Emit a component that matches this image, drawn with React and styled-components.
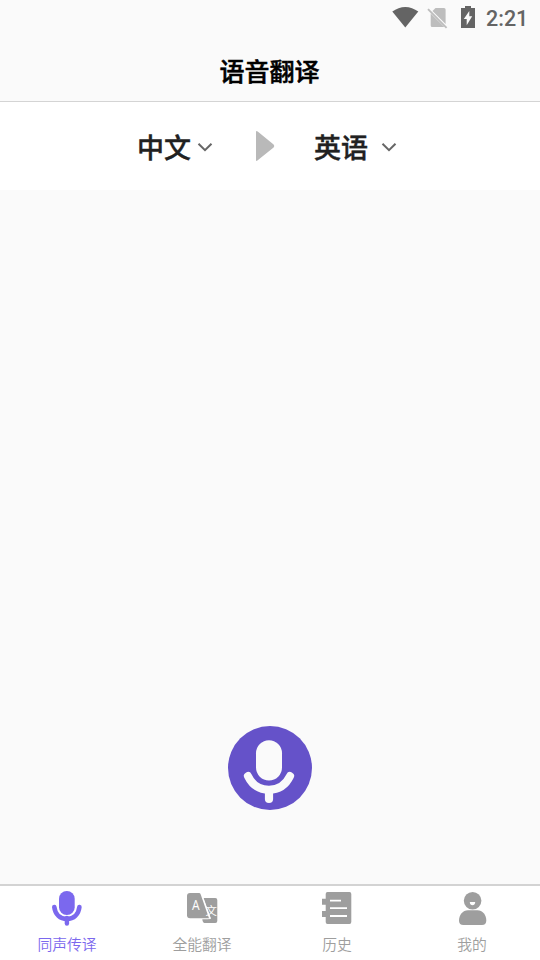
import React, { Component } from 'react';
import styled, { createGlobalStyle } from 'styled-components';

const GlobalStyle = createGlobalStyle`
  body {
    margin: 0;
    font-family: Roboto, "Noto Sans CJK SC", sans-serif;
  }
`;
const Screen = styled.div`
  display: flex;
  flex-direction: column;
  height: 100vh;
  background-color: #fafafa;
`;
const StatusBar = styled.div`
  display: flex;
  justify-content: flex-end;
  align-items: center;
  height: 36px;
  padding-right: 13px;
  color: #646464;
`;
const StatusIcons = styled.svg`
  display: block;
  width: 90px;
  height: 36px;
`;
const Clock = styled.span`
  width: 41px;
  margin-left: 5px;
  font-size: 21.5px;
  font-weight: 500;
  line-height: 36px;
  padding-top: 2px;
  white-space: nowrap;
`;
const Title = styled.h1`
  height: 65px;
  margin: 0;
  padding-right: 1px;
  border-bottom: 1px solid #d4d4d4;
  font-size: 25px;
  font-weight: 500;
  line-height: 73px;
  text-align: center;
  color: #000;
  -webkit-text-stroke: 0.5px #000;
`;
const LanguageBar = styled.div`
  display: flex;
  align-items: center;
  height: 88px;
  padding-left: 137px;
  background-color: white;
`;
const Language = styled.button`
  display: flex;
  align-items: center;
  gap: ${props => props.$gap}px;
  padding: 0;
  border: 0;
  background: none;
  font-family: inherit;
  font-size: 27px;
  font-weight: 500;
  color: #212121;
`;
const LanguageName = styled.span`
  padding-top: 6px;
  line-height: 40px;
  -webkit-text-stroke: 0.4px #212121;
`;
const Chevron = styled.svg`
  display: block;
  width: 16px;
  height: 10px;
  margin-top: 2px;
`;
const Arrow = styled.svg`
  display: block;
  width: 20px;
  height: 32px;
  margin: 0 39px 0 42px;
`;
const Content = styled.main`
  flex: 1;
  display: flex;
  justify-content: center;
  align-items: flex-end;
  padding-bottom: 74px;
`;
const RecordButton = styled.button`
  width: 84px;
  height: 84px;
  padding: 0;
  border: 0;
  border-radius: 50%;
  background-color: #6552c9;
`;
const RecordIcon = styled.svg`
  display: block;
  width: 84px;
  height: 84px;
`;
const TabBar = styled.nav`
  display: flex;
  height: 74px;
  border-top: 2px solid #d3d3d3;
  background-color: white;
`;
const Tab = styled.div`
  flex: 1;
  display: flex;
  flex-direction: column;
  align-items: center;
  padding-top: 4px;
  color: ${props => (props.$active ? '#7b68ee' : '#9e9e9e')};
`;
const TabIcon = styled.svg`
  display: block;
  width: 33px;
  height: 37px;
`;
const TabLabel = styled.span`
  margin-top: 7px;
  margin-right: 1px;
  font-size: 14.8px;
  font-weight: 350;
  line-height: 22px;
`;

const Down = () => (
  <Chevron viewBox="0 0 16 10" fill="none" stroke="#666" strokeWidth="2">
    <path d="M1.5 1.7L8 8.2L14.5 1.7" />
  </Chevron>
);

const icons = {
  mic: (
    <g>
      <rect x="8" y="1" width="15.7" height="24" rx="7.8" fill="currentColor" />
      <path
        d="M3.3 17C4.2 24.7 9.2 29 15.9 29S27.5 24.7 28.4 17"
        fill="none" stroke="currentColor" strokeWidth="4.6" strokeLinecap="round" />
      <path d="M15.9 28V33.6" stroke="currentColor" strokeWidth="4.4" strokeLinecap="round" />
    </g>
  ),
  translate: (
    <g>
      <path
        d="M17.2 8H29.3Q31.3 8 31.3 10V31Q31.3 33 29.3 33H18.5Q16.8 33 16.3 29.2H22.4L24.6 27.9Z"
        fill="currentColor" />
      <path d="M15 3L24.2 29" stroke="white" strokeWidth="1.6" />
      <path
        d="M4 3H13Q14.2 3 14.7 4.4L23 28.2H4Q1 28.2 1 25.2V6Q1 3 4 3Z"
        fill="currentColor" />
      <text x="6.1" y="20.2" fontSize="14" fontFamily="Open Sans" textLength="7.6" lengthAdjust="spacingAndGlyphs" fill="white">A</text>
      <text x="19.6" y="24.8" fontSize="11.4" fill="white">文</text>
    </g>
  ),
  history: (
    <g>
      <path
        d="M6.5 2H28.5Q30.3 2 30.3 4V32Q30.3 34 28.5 34H6.5Q4.7 34 4.7 32V27H1V21H4.7V14.8H1V8.8H4.7V4Q4.7 2 6.5 2Z"
        fill="currentColor" />
      <path d="M9 10.7H20M9 18.1H26M9 26H26" stroke="white" strokeWidth="1.8" />
    </g>
  ),
  profile: (
    <g fill="currentColor">
      <circle cx="16.6" cy="10.7" r="8.8" />
      <path d="M12 20.2H21.4C26.5 20.2 30.3 25 30.3 30.4C30.3 33.6 28.7 35 26 35H7.3C4.6 35 3 33.6 3 30.4C3 25 6.9 20.2 12 20.2Z" />
      <path d="M13.8 12H19.2C19.2 16.4 13.8 16.4 13.8 12Z" fill="white" />
    </g>
  ),
};

const tabs = [
  { icon: 'mic', label: '同声传译' },
  { icon: 'translate', label: '全能翻译' },
  { icon: 'history', label: '历史' },
  { icon: 'profile', label: '我的' },
];

export default class App extends Component {
  constructor(props) {
    super(props);

    this.state = { tab: 'mic' };
  }

  render() {
    const { tab } = this.state;

    return (
      <Screen>
        <GlobalStyle />
        <StatusBar>
          <StatusIcons viewBox="0 0 90 36">
            <path d="M1.3 11.6C9.2 5.3 19.4 5.3 27.3 11.6L14.3 27.6Z" fill="#646464" />
            <path d="M44.5 8H53Q54.6 8 54.6 9.6V24L41.5 10.9ZM39.7 13.4L53.3 27H41.3Q39.7 27 39.7 25.4Z" fill="#bdbdbd" />
            <path d="M37 9.2L55.6 27.8" stroke="#bdbdbd" strokeWidth="1.9" />
            <path d="M74 6H80V8H84V28H70V8H74Z" fill="#646464" />
            <path d="M78.3 11V16.3H81.2L75.7 25.2V19H72.8Z" fill="#fafafa" />
          </StatusIcons>
          <Clock>2:21</Clock>
        </StatusBar>
        <Title>语音翻译</Title>
        <LanguageBar>
          <Language $gap={6}><LanguageName>中文</LanguageName><Down /></Language>
          <Arrow viewBox="0 0 20 32">
            <path d="M1 2Q1 .2 2.7 1.6L18.6 14.5Q20 16 18.6 17.5L2.7 30.3Q1 31.6 1 30Z" fill="#b9b9b9" />
          </Arrow>
          <Language $gap={13}><LanguageName>英语</LanguageName><Down /></Language>
        </LanguageBar>
        <Content>
          <RecordButton>
            <RecordIcon viewBox="0 0 84 84">
              <rect x="28" y="14.2" width="26" height="40.4" rx="13" fill="#fafafa" />
              <path
                d="M19.9 50C24 58.6 31.5 63.7 41 63.7S58 58.6 62.1 50"
                fill="none" stroke="#fafafa" strokeWidth="8" strokeLinecap="round" />
              <path d="M41 64V73" stroke="#fafafa" strokeWidth="8.2" strokeLinecap="round" />
            </RecordIcon>
          </RecordButton>
        </Content>
        <TabBar>
          {tabs.map(item => (
            <Tab
              key={item.icon}
              $active={item.icon === tab}
              onClick={() => this.setState({ tab: item.icon })}>
              <TabIcon viewBox="0 0 33 37">{icons[item.icon]}</TabIcon>
              <TabLabel>{item.label}</TabLabel>
            </Tab>
          ))}
        </TabBar>
      </Screen>
    );
  }
}
